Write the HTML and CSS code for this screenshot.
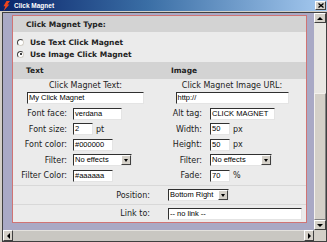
FILE: index.html
```html
<!DOCTYPE html>
<html lang="en">
<head>
    <meta charset="UTF-8">
    <meta name="viewport" content="width=device-width, initial-scale=1.0">
    <title>Click Magnet</title>
    <link rel="stylesheet" href="styles.css">
</head>
<body>
    <div class="window">
        <div class="titlebar">
            <svg class="app-icon" width="8" height="10" viewBox="0 0 8 10">
                <path d="M4.5 0 H8 L5.4 3.6 H7.4 L1.6 10 L3.4 5.2 H1.4 Z" fill="#f0441c"/>
            </svg>
            <span class="title">Click Magnet</span>
            <span class="close-btn">
                <svg width="6" height="5" viewBox="0 0 6 5"><path d="M0.5 0.5 L5.5 4.5 M5.5 0.5 L0.5 4.5" stroke="#000" stroke-width="1.3"/></svg>
            </span>
        </div>

        <div class="client">
            <div class="page">
                <div class="panel">
                    <div class="head">Click Magnet Type:</div>
                    <div class="radios">
                        <div class="radio"><span class="dot"></span>Use Text Click Magnet</div>
                        <div class="radio"><span class="dot checked"></span>Use Image Click Magnet</div>
                    </div>

                    <div class="head two">
                        <div>Text</div>
                        <div>Image</div>
                    </div>

                    <div class="form">
                        <div class="col">
                            <div class="cap">Click Magnet Text:</div>
                            <div class="field" style="width: 117px">My Click Magnet</div>
                            <div class="pairs left">
                                <span class="lbl">Font face:</span>
                                <div class="ctrl"><span class="field" style="width: 49px">verdana</span></div>
                                <span class="lbl">Font size:</span>
                                <div class="ctrl"><span class="field" style="width: 20px">2</span><span class="unit">pt</span></div>
                                <span class="lbl">Font color:</span>
                                <div class="ctrl"><span class="field" style="width: 40px">#000000</span></div>
                                <span class="lbl">Filter:</span>
                                <div class="ctrl"><span class="select" style="width: 59px"><span class="val">No effects</span><span class="drop"><i></i></span></span></div>
                                <span class="lbl">Filter Color:</span>
                                <div class="ctrl"><span class="field" style="width: 40px">#aaaaaa</span></div>
                            </div>
                        </div>
                        <div class="col">
                            <div class="cap">Click Magnet Image URL:</div>
                            <div class="field" style="width: 113px">http://</div>
                            <div class="pairs right">
                                <span class="lbl">Alt tag:</span>
                                <div class="ctrl"><span class="field" style="width: 65px">CLICK MAGNET</span></div>
                                <span class="lbl">Width:</span>
                                <div class="ctrl"><span class="field" style="width: 20px">50</span><span class="unit">px</span></div>
                                <span class="lbl">Height:</span>
                                <div class="ctrl"><span class="field" style="width: 20px">50</span><span class="unit">px</span></div>
                                <span class="lbl">Filter:</span>
                                <div class="ctrl"><span class="select" style="width: 62px"><span class="val">No effects</span><span class="drop"><i></i></span></span></div>
                                <span class="lbl">Fade:</span>
                                <div class="ctrl"><span class="field" style="width: 20px">70</span><span class="unit">%</span></div>
                            </div>
                        </div>
                    </div>

                    <div class="opt-row">
                        <span class="lbl">Position:</span>
                        <div class="ctrl"><span class="select" style="width: 61px"><span class="val">Bottom Right</span><span class="drop"><i></i></span></span></div>
                    </div>
                    <div class="opt-row">
                        <span class="lbl">Link to:</span>
                        <div class="ctrl"><span class="field" style="width: 134px">-- no link --</span></div>
                    </div>
                </div>
            </div>

            <div class="vscroll">
                <div class="sb-btn"><i class="arr up"></i></div>
                <div class="sb-track"></div>
                <div class="sb-thumb"></div>
                <div class="sb-btn"><i class="arr down"></i></div>
            </div>
            <div class="hscroll">
                <div class="sb-btn"><i class="arr left"></i></div>
                <div class="sb-bar"></div>
                <div class="sb-btn"><i class="arr right"></i></div>
            </div>
            <div class="corner"></div>
        </div>
    </div>
</body>
</html>
```

FILE: styles.css
```css
body {
    margin: 0;
    background: #d4d0c8;
    font-family: "DejaVu Sans", Verdana, sans-serif;
    font-size: 8px;
    color: #222;
}
.window {
    width: 327px;
    height: 242px;
    display: flex;
    flex-direction: column;
    overflow: hidden;
}
.titlebar {
    height: 11px;
    flex: none;
    display: flex;
    align-items: center;
    padding-left: 2px;
    background: linear-gradient(to right, #0a246a, #3a6ea5 45%, #a6caf0);
}
.app-icon {
    margin-right: 4px;
}
.title {
    color: #fff;
    font: bold 6.5px "Liberation Sans", Arial, sans-serif;
}
.close-btn {
    margin-left: auto;
    margin-right: 1px;
    width: 9px;
    height: 7px;
    background: #d4d0c8;
    border: 1px solid;
    border-color: #fff #404040 #404040 #fff;
    display: flex;
    align-items: center;
    justify-content: center;
}
.client {
    margin: 1px 0 0 2px;
    border: 1px solid #404040;
    display: grid;
    grid-template-columns: 311px 12px;
    grid-template-rows: 217px 11px;
}
.page {
    background: #a9a9c5;
    overflow: hidden;
    padding: 2px 0 0 9px;
}
.panel {
    width: 293px;
    border: 1px solid #d07474;
    background: #ebebeb;
}
.head {
    height: 16px;
    display: flex;
    align-items: center;
    padding-left: 13px;
    background: #d3d3d3;
    font-weight: bold;
    font-size: 7.5px;
}
.head.two {
    height: 17px;
    padding-left: 0;
    display: grid;
    grid-template-columns: 145px 148px;
}
.head.two div {
    padding-left: 13px;
}
.radios {
    height: 30px;
    box-sizing: border-box;
    padding: 4px 0 0 4px;
}
.radio {
    height: 12px;
    display: flex;
    align-items: center;
    gap: 6px;
    font-weight: bold;
    font-size: 7.5px;
}
.dot {
    width: 5px;
    height: 5px;
    border-radius: 50%;
    background: #fff;
    border: 1px solid;
    border-color: #404040 #d4d0c8 #d4d0c8 #404040;
    display: flex;
    align-items: center;
    justify-content: center;
}
.dot.checked::after {
    content: "";
    width: 2px;
    height: 2px;
    border-radius: 50%;
    background: #000;
}
.form {
    height: 106px;
    box-sizing: border-box;
    padding-top: 1px;
    display: grid;
    grid-template-columns: 145px 148px;
}
.col {
    display: flex;
    flex-direction: column;
    align-items: center;
}
.cap {
    height: 11px;
    line-height: 11px;
    margin-bottom: 1px;
}
.pairs {
    align-self: stretch;
    margin-top: 2px;
    display: grid;
    grid-auto-rows: 15.5px;
    align-items: center;
}
.pairs.left {
    grid-template-columns: 54px auto;
    column-gap: 6px;
}
.pairs.right {
    grid-template-columns: 44px auto;
    column-gap: 8px;
}
.lbl {
    text-align: right;
    white-space: nowrap;
}
.ctrl {
    display: flex;
    align-items: center;
}
.field, .select {
    box-sizing: border-box;
    height: 12px;
    background: #fff;
    border: 1px solid;
    border-color: #303030 #e4e4e4 #e4e4e4 #303030;
    font: 7.5px "Liberation Sans", Arial, sans-serif;
    color: #000;
    white-space: nowrap;
    overflow: hidden;
}
.field {
    display: block;
    padding-left: 1px;
    line-height: 10px;
}
.unit {
    margin-left: 3px;
}
.select {
    display: flex;
    align-items: stretch;
}
.select .val {
    flex: 1;
    padding-left: 1px;
    line-height: 10px;
    overflow: hidden;
}
.drop {
    width: 8px;
    background: #d4d0c8;
    border: 1px solid;
    border-color: #fff #404040 #404040 #fff;
    display: flex;
    align-items: center;
    justify-content: center;
}
.drop i {
    border-left: 2.5px solid transparent;
    border-right: 2.5px solid transparent;
    border-top: 3px solid #000;
}
.opt-row {
    height: 19px;
    box-sizing: border-box;
    border-top: 1px solid #d8d8d8;
    display: grid;
    grid-template-columns: 145px 148px;
    align-items: center;
}
.opt-row + .opt-row {
    height: 18px;
}
.opt-row .lbl {
    padding-right: 8px;
}
.opt-row .ctrl {
    padding-left: 10px;
}
.vscroll {
    display: flex;
    flex-direction: column;
}
.hscroll {
    display: flex;
}
.sb-btn {
    flex: none;
    box-sizing: border-box;
    width: 12px;
    height: 10px;
    background: #d4d0c8;
    border: 1px solid;
    border-color: #fff #404040 #404040 #fff;
    display: flex;
    align-items: center;
    justify-content: center;
}
.hscroll .sb-btn {
    width: 10px;
    height: 11px;
}
.sb-track {
    flex: 1;
    background: #e9e7e3;
}
.sb-thumb {
    height: 127px;
    box-sizing: border-box;
    background: #d4d0c8;
    border: 1px solid;
    border-color: #f4f2ee #808080 #808080 #f4f2ee;
}
.sb-bar {
    flex: 1;
    background: #c9c7c2;
    border-top: 1px solid #e4e2de;
}
.corner {
    background: #d4d0c8;
}
.arr {
    width: 0;
    height: 0;
}
.arr.up {
    border-left: 3px solid transparent;
    border-right: 3px solid transparent;
    border-bottom: 3px solid #000;
}
.arr.down {
    border-left: 3px solid transparent;
    border-right: 3px solid transparent;
    border-top: 3px solid #000;
}
.arr.left {
    border-top: 3px solid transparent;
    border-bottom: 3px solid transparent;
    border-right: 3px solid #000;
}
.arr.right {
    border-top: 3px solid transparent;
    border-bottom: 3px solid transparent;
    border-left: 3px solid #000;
}
```
